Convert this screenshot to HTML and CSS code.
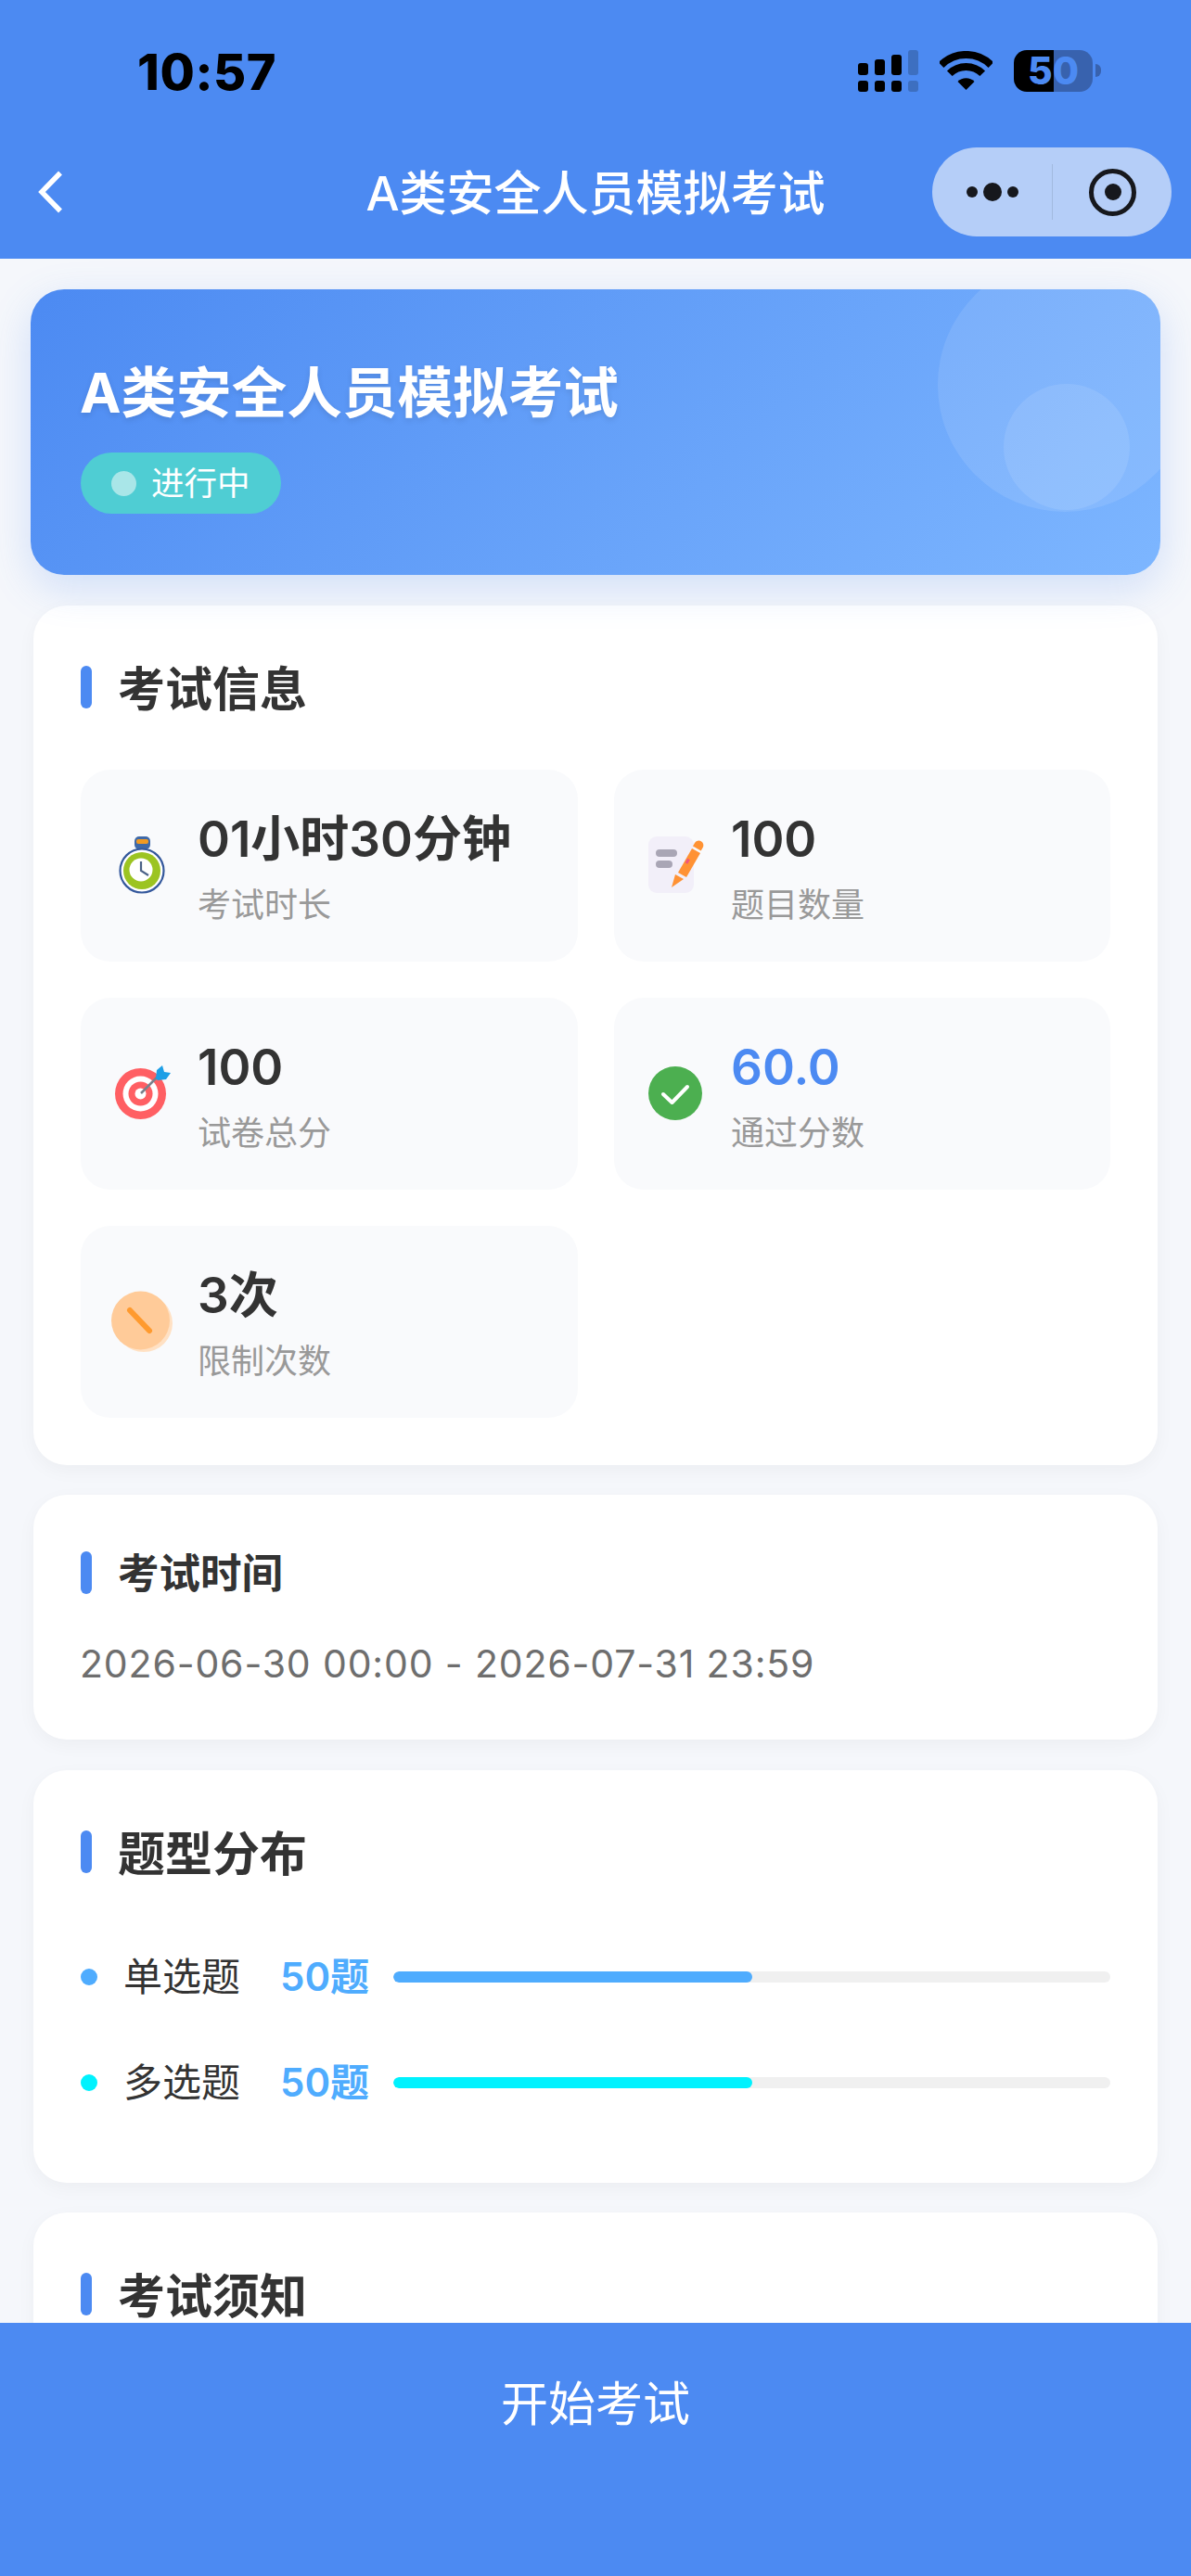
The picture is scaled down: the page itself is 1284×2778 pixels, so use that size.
FILE: index.html
```html
<!DOCTYPE html>
<html lang="zh-CN">
<head>
<meta charset="utf-8">
<title>A类安全人员模拟考试</title>
<link rel="stylesheet" href="styles.css">
</head>
<body>
<div class="app">
  <header class="top">
    <div class="status">
      <span class="time">10:57</span>
      <div class="status-icons">
        <svg class="signal" width="65" height="45" viewBox="0 0 65 45">
          <rect x="0" y="14" width="11" height="13" rx="3"/>
          <rect x="18" y="10" width="11" height="17" rx="3"/>
          <rect x="36" y="5" width="11" height="22" rx="3"/>
          <rect class="dim" x="54" y="0" width="11" height="27" rx="3"/>
          <rect x="0" y="33" width="11" height="12" rx="3"/>
          <rect x="18" y="33" width="11" height="12" rx="3"/>
          <rect x="36" y="33" width="11" height="12" rx="3"/>
          <rect class="dim" x="54" y="33" width="11" height="12" rx="3"/>
        </svg>
        <svg class="wifi" width="57" height="42" viewBox="0 0 57 42">
          <path d="M1.6 15.1A38 38 0 0 1 55.4 15.1" fill="none" stroke="#000" stroke-width="8"/>
          <path d="M10.8 24.3A25 25 0 0 1 46.2 24.3" fill="none" stroke="#000" stroke-width="8"/>
          <path d="M28.5 42L19.5 33A12.7 12.7 0 0 1 37.5 33Z"/>
        </svg>
        <div class="battery">
          <div class="battery-body">50</div>
          <div class="battery-nub"></div>
        </div>
      </div>
    </div>
    <nav class="nav">
      <svg class="back" width="27" height="46" viewBox="0 0 27 46">
        <path d="M24 2.5L4 23L24 43.5" fill="none" stroke="#fff" stroke-width="5.5"/>
      </svg>
      <h1 class="nav-title">A类安全人员模拟考试</h1>
      <div class="capsule">
        <div class="capsule-dots">
          <span class="dot-s"></span><span class="dot-l"></span><span class="dot-s"></span>
        </div>
        <div class="capsule-line"></div>
        <div class="capsule-target"><span></span></div>
      </div>
    </nav>
  </header>

  <main class="content">
    <section class="hero">
      <div class="hero-circle-big"></div>
      <div class="hero-circle-small"></div>
      <h2 class="hero-title">A类安全人员模拟考试</h2>
      <div class="pill"><span class="pill-dot"></span><span class="pill-text">进行中</span></div>
    </section>

    <section class="card card-info">
      <h3 class="sec-title">考试信息</h3>
      <div class="grid">
        <div class="item">
          <svg class="item-icon" viewBox="0 0 68 68">
            <rect x="26" y="3" width="17" height="14" rx="5" fill="#3f69a8"/>
            <rect x="28" y="6" width="13" height="5" rx="2" fill="#f19a22"/>
            <circle cx="34" cy="40" r="23.5" fill="#fff" stroke="#34589c" stroke-width="2.2"/>
            <circle cx="34" cy="40" r="20" fill="#9cc421"/>
            <circle cx="33" cy="39" r="12.5" fill="#fff"/>
            <path d="M33 30V40L41 45" fill="none" stroke="#4c6288" stroke-width="2.2"/>
          </svg>
          <div class="item-text">
            <div class="item-value">01小时30分钟</div>
            <div class="item-label">考试时长</div>
          </div>
        </div>
        <div class="item">
          <svg class="item-icon" viewBox="0 0 68 68">
            <rect x="5" y="3" width="49" height="61" rx="9" fill="#f2eff9"/>
            <rect x="13" y="17" width="23" height="8" rx="4" fill="#a9a6b5"/>
            <rect x="13" y="29" width="18" height="8" rx="4" fill="#a9a6b5"/>
            <path d="M30 58L34 44L43 49Z" fill="#ff9234"/>
            <path d="M37 42L52 16L61 21L46 47Z" fill="#ff9234"/>
            <path d="M53 13.5L55 10A5 5 0 0 1 63.7 15L61.7 18.5Z" fill="#ff9234"/>
            <path d="M46 32L48.5 27.5" stroke="#f2557a" stroke-width="3"/>
          </svg>
          <div class="item-text">
            <div class="item-value">100</div>
            <div class="item-label">题目数量</div>
          </div>
        </div>
        <div class="item">
          <svg class="item-icon" viewBox="0 0 68 68">
            <circle cx="32.5" cy="34.5" r="27.5" fill="#ff5f63"/>
            <circle cx="32.5" cy="34.5" r="19" fill="#fff"/>
            <circle cx="32.5" cy="34.5" r="13" fill="#ff5f63"/>
            <circle cx="32.5" cy="34.5" r="6" fill="#fff"/>
            <path d="M33 34L52 15" stroke="#78808c" stroke-width="2.5"/>
            <path d="M49 18L50 9L56 4L58 11L65 12L60 19L51 20Z" fill="#1e9fe6"/>
          </svg>
          <div class="item-text">
            <div class="item-value">100</div>
            <div class="item-label">试卷总分</div>
          </div>
        </div>
        <div class="item">
          <svg class="item-icon" viewBox="0 0 68 68">
            <circle cx="34" cy="34" r="29" fill="#4caf50"/>
            <path d="M21 35L30.5 44L47 27" fill="none" stroke="#fff" stroke-width="4" stroke-linecap="round" stroke-linejoin="round"/>
          </svg>
          <div class="item-text">
            <div class="item-value item-value-blue">60.0</div>
            <div class="item-label">通过分数</div>
          </div>
        </div>
        <div class="item">
          <svg class="item-icon" viewBox="0 0 68 68">
            <circle cx="36" cy="36" r="31" fill="#ffe1c4"/>
            <circle cx="32.5" cy="33" r="31.5" fill="#ffcb99"/>
            <path d="M21 22L42 44" stroke="#ff9a2e" stroke-width="6" stroke-linecap="round"/>
          </svg>
          <div class="item-text">
            <div class="item-value">3次</div>
            <div class="item-label">限制次数</div>
          </div>
        </div>
      </div>
    </section>

    <section class="card card-time">
      <h3 class="sec-title sec-title-small">考试时间</h3>
      <div class="date">2026-06-30 00:00 - 2026-07-31 23:59</div>
    </section>

    <section class="card card-dist">
      <h3 class="sec-title">题型分布</h3>
      <div class="dist">
        <div class="dist-row">
          <span class="dist-dot dist-dot-a"></span>
          <span class="dist-name">单选题</span>
          <span class="dist-count">50题</span>
          <div class="bar"><div class="bar-fill bar-fill-a" style="width:50%"></div></div>
        </div>
        <div class="dist-row">
          <span class="dist-dot dist-dot-b"></span>
          <span class="dist-name">多选题</span>
          <span class="dist-count">50题</span>
          <div class="bar"><div class="bar-fill bar-fill-b" style="width:50%"></div></div>
        </div>
      </div>
    </section>

    <section class="card card-notice">
      <h3 class="sec-title">考试须知</h3>
    </section>
  </main>

  <footer class="footer">
    <div class="start">开始考试</div>
  </footer>
</div>
</body>
</html>
```
FILE: styles.css
```css
* { box-sizing: border-box; }
html, body { margin: 0; padding: 0; }
body {
  font-family: Inter, "Noto Sans CJK SC", sans-serif;
  background: #f5f7fb;
  color: #333;
}
h1, h2, h3 { margin: 0; }
.app {
  width: 1284px;
  height: 2778px;
  display: flex;
  flex-direction: column;
  overflow: hidden;
}

/* top */
.top { background: #4c8af2; height: 279px; flex: none; }
.status {
  height: 135px;
  padding: 20px 97px 0 148px;
  display: flex;
  align-items: center;
  justify-content: space-between;
}
.time { font-size: 54px; font-weight: 800; color: #000; letter-spacing: .6px; line-height: 1; }
.status-icons { display: flex; align-items: center; gap: 23px; margin-top: -3px; }
.signal, .wifi { display: block; fill: #000; }
.signal .dim { fill: #3d6fc0; }
.battery { display: flex; align-items: center; gap: 3px; }
.battery-body {
  width: 85px;
  height: 45px;
  border-radius: 14px;
  background: linear-gradient(90deg, #000 50.5%, #3862ae 50.5%);
  color: #4c8af2;
  font-size: 41px;
  font-weight: 800;
  line-height: 45px;
  text-align: center;
}
.battery-nub { width: 6px; height: 14px; background: #3862ae; border-radius: 0 7px 7px 0; }
.nav {
  height: 144px;
  padding: 0 21px;
  display: grid;
  grid-template-columns: minmax(0, 1fr) auto minmax(0, 1fr);
  align-items: center;
}
.back { display: block; margin-left: 20px; }
.nav-title { font-size: 51px; font-weight: 500; color: #fff; line-height: 1.4; white-space: nowrap; margin-top: 4px; }
.capsule {
  justify-self: end;
  width: 258px;
  height: 96px;
  border-radius: 48px;
  background: #b5cef8;
  display: flex;
  align-items: center;
}
.capsule-dots { width: 129px; display: flex; align-items: center; justify-content: center; gap: 6px; }
.dot-s { width: 12px; height: 12px; border-radius: 50%; background: #16181d; }
.dot-l { width: 20px; height: 20px; border-radius: 50%; background: #16181d; }
.capsule-line { width: 1px; height: 60px; background: rgba(0, 0, 0, .1); }
.capsule-target {
  width: 51px;
  height: 51px;
  margin-left: 39px;
  border: 5.5px solid #16181d;
  border-radius: 50%;
  display: flex;
  align-items: center;
  justify-content: center;
}
.capsule-target span { width: 18px; height: 18px; border-radius: 50%; background: #16181d; }

/* content */
.content {
  flex: 1;
  min-height: 0;
  overflow: hidden;
  padding: 33px 36px 0;
  display: flex;
  flex-direction: column;
  gap: 32.5px;
}
.hero {
  flex: none;
  position: relative;
  overflow: hidden;
  margin: 0 -3px;
  height: 308px;
  padding: 68px 53px 0 54px;
  border-radius: 36px;
  background: linear-gradient(135deg, #4c8af2 0%, #7db6ff 100%);
  box-shadow: 0 14px 44px rgba(76, 138, 242, .22);
}
.hero-circle-big {
  position: absolute;
  top: -34px;
  right: -34px;
  width: 274px;
  height: 274px;
  border-radius: 50%;
  background: rgba(255, 255, 255, .1);
}
.hero-circle-small {
  position: absolute;
  right: 33px;
  bottom: 70px;
  width: 136px;
  height: 136px;
  border-radius: 50%;
  background: rgba(255, 255, 255, .1);
}
.hero-title {
  position: relative;
  margin-left: -1px;
  font-size: 59.6px;
  font-weight: 700;
  line-height: 87px;
  color: #fff;
  text-shadow: 0 3px 6px rgba(0, 0, 0, .1);
}
.pill {
  position: relative;
  margin-top: 21px;
  width: 216px;
  height: 66px;
  padding-left: 33px;
  border-radius: 33px;
  background: #4fcdd3;
  color: #fff;
  font-size: 35.5px;
  display: flex;
  align-items: center;
  gap: 16px;
}
.pill-text { margin-top: -6px; }
.pill-dot { width: 27px; height: 27px; border-radius: 50%; background: #a9e6e8; }

.card {
  flex: none;
  background: #fff;
  border-radius: 36px;
  padding: 51px;
  box-shadow: 0 6px 20px rgba(0, 0, 0, .04);
}
.sec-title {
  position: relative;
  height: 74px;
  padding: 3px 0 0 40px;
  font-size: 51px;
  font-weight: 700;
  line-height: 74px;
  color: #333;
}
.sec-title::before {
  content: "";
  position: absolute;
  left: 0;
  top: 14px;
  width: 12px;
  height: 46px;
  border-radius: 6px;
  background: #4c8af2;
}
.sec-title-small { height: 65px; padding-top: 2px; font-size: 44.5px; line-height: 65px; }
.sec-title-small::before { top: 10px; }
.card-info .grid { margin-top: 52px; }
.grid {
  display: grid;
  grid-template-columns: 536px 535px;
  grid-auto-rows: 207px;
  column-gap: 39px;
  row-gap: 39px;
}
.item {
  background: #f9fafc;
  border-radius: 32px;
  padding-left: 32px;
  display: flex;
  align-items: center;
  gap: 26px;
}
.item-icon { width: 68px; height: 68px; flex: none; display: block; }
.item-text { margin-top: 3px; }
.item-value { font-size: 53px; font-weight: 600; line-height: 72px; color: #333; }
.item-value-blue { color: #4c8af2; }
.item-label { font-size: 36px; line-height: 50px; color: #999; margin-top: 10px; }

.card-time { padding-bottom: 54px; }
.date { margin-top: 36px; margin-bottom: -2px; margin-left: -1px; font-size: 41px; letter-spacing: .85px; line-height: 60px; color: #6e6e6e; white-space: nowrap; }

.card-dist { padding-bottom: 78px; }
.dist { margin-top: 68px; display: flex; flex-direction: column; gap: 54px; }
.dist-row { display: flex; align-items: center; height: 60px; }
.dist-dot { width: 18px; height: 18px; border-radius: 50%; flex: none; }
.dist-dot-a { background: #4facfe; }
.dist-dot-b { background: #00f2fe; }
.dist-name { margin: -6px 0 0 28px; width: 169px; flex: none; font-size: 42px; color: #333; }
.dist-count { margin-top: -6px; width: 122px; flex: none; font-size: 42px; font-weight: 600; color: #4facfe; }
.bar { flex: 1; height: 12px; border-radius: 6px; background: #f0f0f0; overflow: hidden; }
.bar-fill { height: 100%; border-radius: 6px; }
.bar-fill-a { background: #4facfe; }
.bar-fill-b { background: #00f2fe; }

.card-notice { padding-bottom: 300px; }

.footer {
  height: 273px;
  flex: none;
  padding-bottom: 101px;
  background: #4c8af2;
}
.start {
  height: 168px;
  display: flex;
  align-items: center;
  justify-content: center;
  color: #fff;
  font-size: 51px;
}
```
